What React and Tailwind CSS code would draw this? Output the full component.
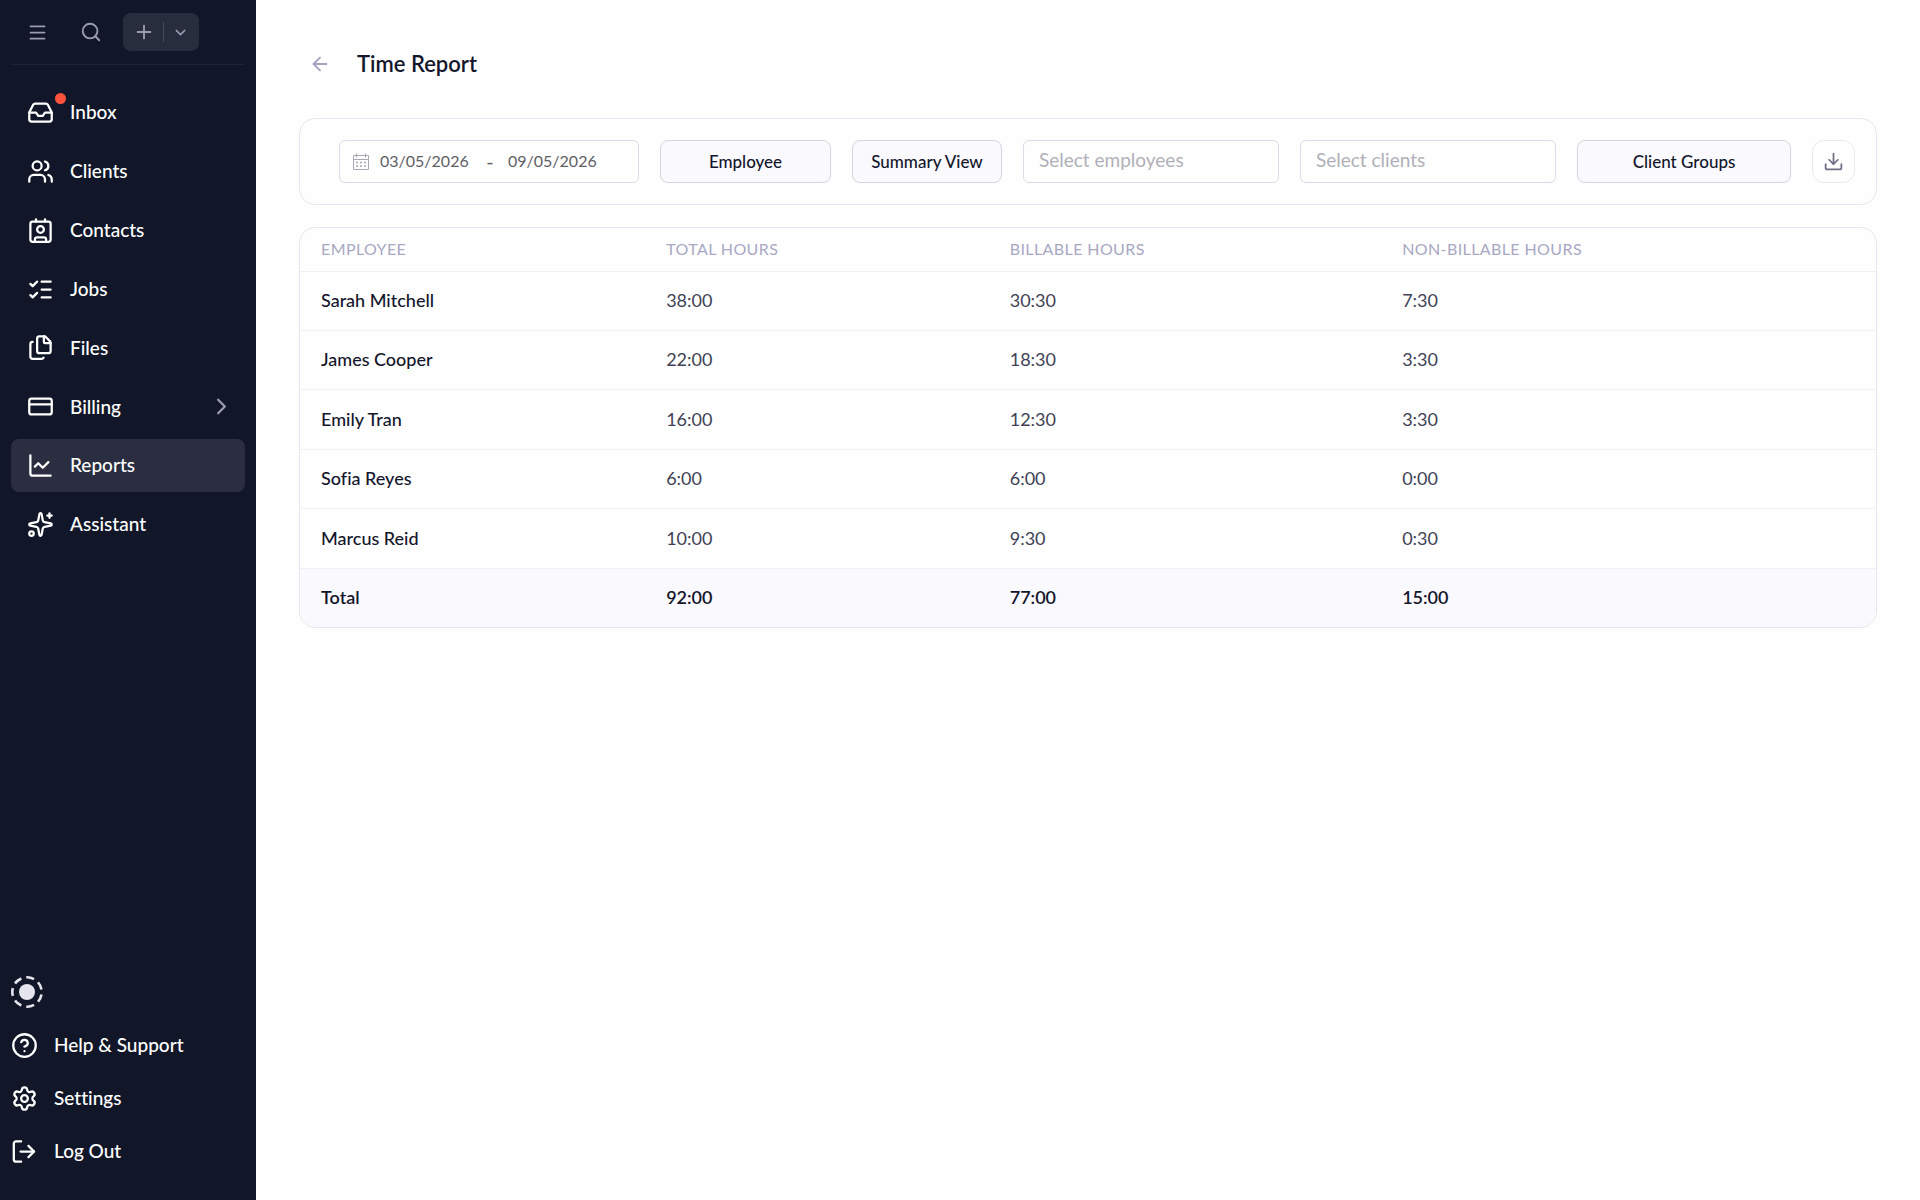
import {
  ArrowLeft,
  ChartLine,
  ChevronDown,
  ChevronRight,
  CircleQuestionMark,
  Contact,
  CreditCard,
  Download,
  Files,
  Inbox,
  ListChecks,
  Menu,
  Plus,
  Search,
  Settings,
  Sparkles,
  Users,
} from 'lucide-react';
import { clsx } from 'clsx';

const navItems = [
  { icon: Inbox, label: 'Inbox', badge: true },
  { icon: Users, label: 'Clients' },
  { icon: Contact, label: 'Contacts' },
  { icon: ListChecks, label: 'Jobs' },
  { icon: Files, label: 'Files' },
  { icon: CreditCard, label: 'Billing', expandable: true },
  { icon: ChartLine, label: 'Reports', active: true },
  { icon: Sparkles, label: 'Assistant' },
];

const columns = [
  { label: 'Employee', width: 'w-[21.9%]' },
  { label: 'Total Hours', width: 'w-[21.8%]' },
  { label: 'Billable Hours', width: 'w-[24.9%]' },
  { label: 'Non-Billable Hours', width: '' },
];

const rows = [
  { name: 'Sarah Mitchell', total: '38:00', billable: '30:30', nonBillable: '7:30' },
  { name: 'James Cooper', total: '22:00', billable: '18:30', nonBillable: '3:30' },
  { name: 'Emily Tran', total: '16:00', billable: '12:30', nonBillable: '3:30' },
  { name: 'Sofia Reyes', total: '6:00', billable: '6:00', nonBillable: '0:00' },
  { name: 'Marcus Reid', total: '10:00', billable: '9:30', nonBillable: '0:30' },
];

const LogOutIcon = ({ size }) => (
  <svg width={size} height={size} viewBox="0 0 24 24" fill="none" stroke="currentColor" strokeWidth="2" strokeLinecap="round" strokeLinejoin="round">
    <path d="M9 3H4.500a2 2 0 0 0-2 2v14a2 2 0 0 0 2 2H9" />
    <path d="M8.500 12H20.500" />
    <path d="m15.500 7 5 5-5 5" />
  </svg>
);

const StatusIcon = () => (
  <svg width="32" height="32" viewBox="0 0 32 32" fill="none">
    <circle cx="16" cy="16" r="8" fill="#e6e5ee" />
    <circle cx="16" cy="16" r="14.700" stroke="#e6e5ee" strokeWidth="2.600" pathLength="84" strokeDasharray="7.400 4.600" strokeDashoffset="-2.300" />
  </svg>
);

const CalendarIcon = () => (
  <svg width="18" height="18" viewBox="0 0 18 18" fill="none" stroke="#a9a9b4">
    <path d="M1.500 2.500h15v14h-15zM1.500 6.500h15M4.500 0.500v4M13.500 0.500v4" />
    <path d="M4 9.500h10M4 13h10" strokeWidth="1.300" strokeDasharray="2 2" />
  </svg>
);

const footerItems = [
  { icon: CircleQuestionMark, label: 'Help & Support' },
  { icon: Settings, label: 'Settings' },
  { icon: LogOutIcon, label: 'Log Out' },
];

const Sidebar = () => (
  <aside className="flex w-64 shrink-0 flex-col bg-[#111729] px-[11px] text-white">
    <div className="flex h-[65px] items-center border-b border-[#1c2537] pl-4">
      <button aria-label="Toggle menu" className="text-[#9b9cb3]">
        <Menu size={21} strokeWidth={2} />
      </button>
      <button aria-label="Search" className="ml-8 text-[#9b9cb3]">
        <Search size={22} strokeWidth={2} />
      </button>
      <div className="ml-[21px] flex h-[38px] w-[76px] items-center rounded-lg bg-[#282d3e] text-[#9b9cb3]">
        <button aria-label="Create" className="flex h-full flex-1 items-center justify-center pl-0.5">
          <Plus size={22} strokeWidth={2} />
        </button>
        <span className="h-5 w-px bg-[#474b5b]" />
        <button aria-label="More create options" className="flex h-full w-[35px] items-center justify-center pr-0.5">
          <ChevronDown size={17} strokeWidth={2} />
        </button>
      </div>
    </div>

    <nav className="mt-[21px] grid h-[465px] auto-rows-fr gap-[6px]">
      {navItems.map((item) => (
        <a
          key={item.label}
          href="#"
          className={clsx('flex items-center gap-4 rounded-lg px-4 text-[19px] font-medium', item.active && 'bg-[#2a2e40]')}
        >
          <span className="relative">
            <item.icon size={27} strokeWidth={2} />
            {item.badge && <span className="absolute -top-1.5 -right-3 size-[11px] rounded-full bg-[#ff523d]" />}
          </span>
          {item.label}
          {item.expandable && <ChevronRight size={27} strokeWidth={2} className="-mr-1.5 ml-auto text-[#9b9cb3]" />}
        </a>
      ))}
    </nav>

    <div className="mt-auto flex flex-col pb-[22px]">
      <button aria-label="Status" className="mb-[11px] self-start">
        <StatusIcon />
      </button>
      {footerItems.map((item) => (
        <a key={item.label} href="#" className="flex h-[53px] items-center gap-4 text-[19px] font-medium">
          <item.icon size={27} strokeWidth={2} />
          {item.label}
        </a>
      ))}
    </div>
  </aside>
);

const filterButton = 'h-[43px] rounded-lg border border-[#d5d4e2] bg-[#f9f9fe] text-[17px] font-medium';
const filterInput = 'h-[43px] w-64 rounded-md border border-[#dcdbe8] px-[15px] pb-1 text-[19px] placeholder:text-[#b0b0b8]';

const FilterBar = () => (
  <section className="mt-[29px] flex flex-wrap items-center gap-[21px] rounded-2xl border border-[#e6e5f0] py-[21px] pr-[21px] pl-[39px]">
    <div className="flex h-[43px] w-[300px] items-center rounded-md border border-[#dcdbe8] pl-3 text-[#5f5f66]">
      <CalendarIcon />
      <input aria-label="Start date" defaultValue="03/05/2026" className="ml-[10px] w-[92px] pb-0.5 text-base outline-none" />
      <span className="w-9 pb-0.5 text-center text-xl">-</span>
      <input aria-label="End date" defaultValue="09/05/2026" className="w-[92px] pb-0.5 text-base outline-none" />
    </div>
    <button className={clsx(filterButton, 'w-[171px]')}>Employee</button>
    <button className={clsx(filterButton, 'w-[150px]')}>Summary View</button>
    <input aria-label="Select employees" placeholder="Select employees" className={filterInput} />
    <input aria-label="Select clients" placeholder="Select clients" className={filterInput} />
    <button className={clsx(filterButton, 'w-[214px]')}>Client Groups</button>
    <button aria-label="Download" className="flex size-[43px] items-center justify-center rounded-xl border border-[#eae9f2] text-[#6f6f86]">
      <Download size={21} strokeWidth={2} />
    </button>
  </section>
);

const ReportTable = () => (
  <div className="mt-[22px] overflow-hidden rounded-2xl border border-[#e6e5f0]">
    <table className="h-[399px] w-full table-fixed text-left text-lg">
      <thead>
        <tr className="h-[43px] border-b border-[#f0f0f6]">
          {columns.map((col) => (
            <th key={col.label} className={clsx('pl-[21px] text-base font-normal tracking-wide text-[#a9a8c3] uppercase', col.width)}>
              {col.label}
            </th>
          ))}
        </tr>
      </thead>
      <tbody>
        {rows.map((row) => (
          <tr key={row.name} className="border-b border-[#f0f0f6]">
            <td className="pb-0.5 pl-[21px] font-medium">{row.name}</td>
            <td className="pb-0.5 pl-[21px] text-[#414255]">{row.total}</td>
            <td className="pb-0.5 pl-[21px] text-[#414255]">{row.billable}</td>
            <td className="pb-0.5 pl-[21px] text-[#414255]">{row.nonBillable}</td>
          </tr>
        ))}
        <tr className="bg-[#f9f9fe] font-semibold">
          <td className="pb-0.5 pl-[21px]">Total</td>
          <td className="pb-0.5 pl-[21px]">92:00</td>
          <td className="pb-0.5 pl-[21px]">77:00</td>
          <td className="pb-0.5 pl-[21px]">15:00</td>
        </tr>
      </tbody>
    </table>
  </div>
);

export default function App() {
  return (
    <div className="flex min-h-screen bg-[#fefefe] font-['Lato',sans-serif] text-[#14162b] [font-variant-ligatures:none]">
      <Sidebar />
      <main className="min-w-0 flex-1 px-[43px] pt-[38px]">
        <header className="flex h-[51px] items-center gap-[26px] pl-[10px]">
          <a href="#" aria-label="Back" className="text-[#a5a3c0]">
            <ArrowLeft size={22} strokeWidth={2} />
          </a>
          <h1 className="text-[22px] font-semibold">Time Report</h1>
        </header>
        <FilterBar />
        <ReportTable />
      </main>
    </div>
  );
}
